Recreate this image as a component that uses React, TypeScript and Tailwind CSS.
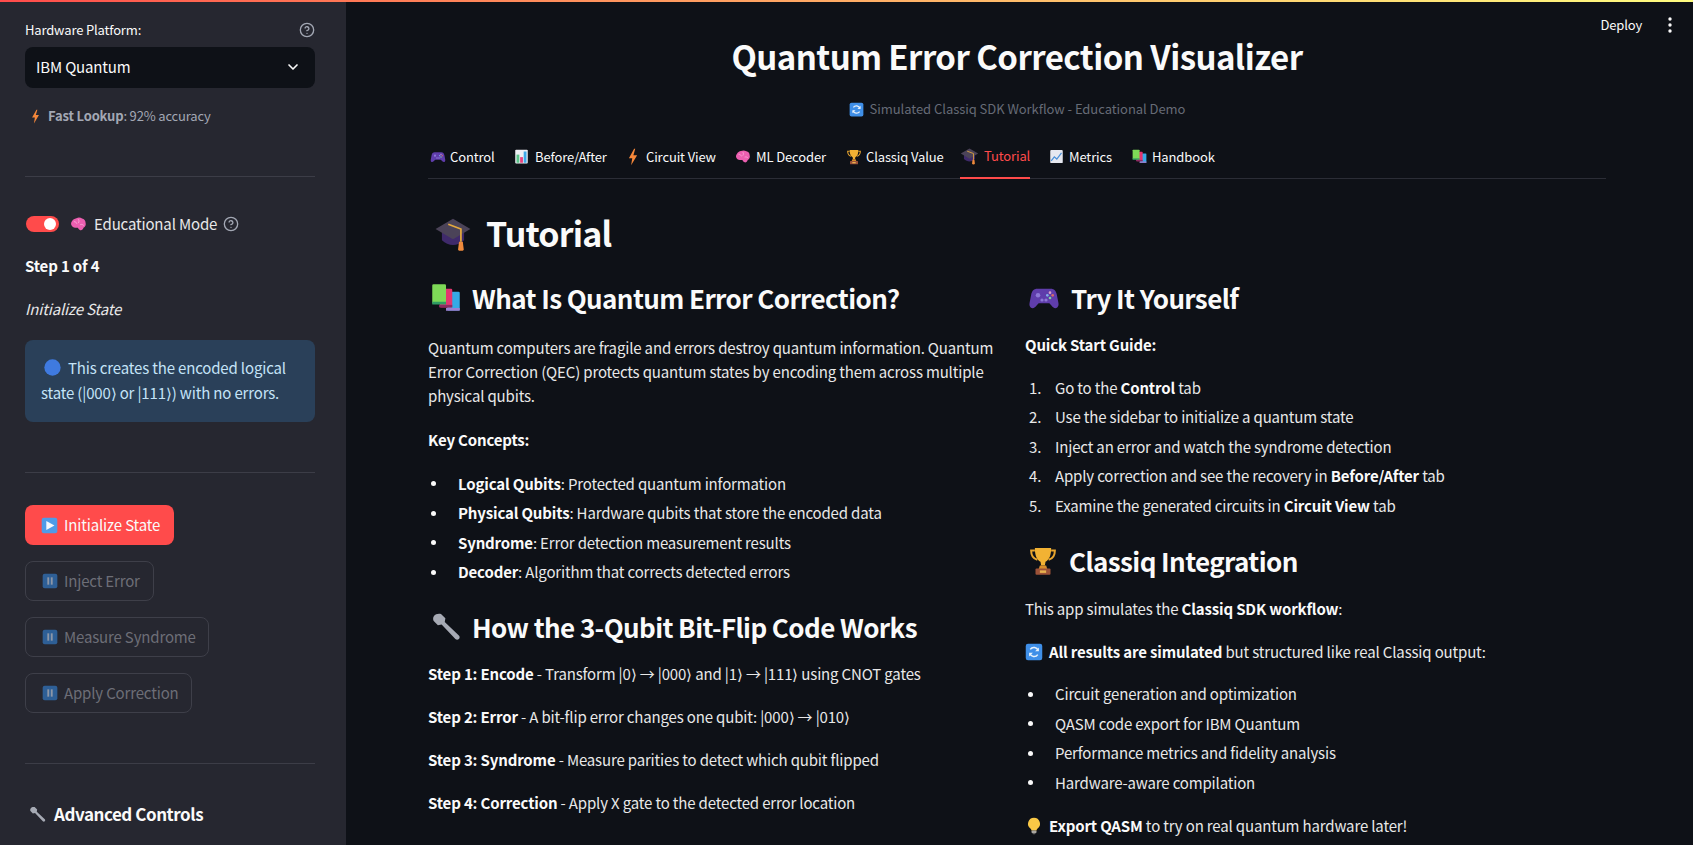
const Gamepad = ({ s }: { s: number }) => (
  <svg width={s} height={s} viewBox="0 0 24 24" className="shrink-0">
    <path d="M7 5h10c2.600 0 4 1.600 4.600 4.400l1.200 6.200c.5 2.400-.6 4-2.200 4-1.300 0-2.200-.9-3.200-2.200L16 16H8l-1.400 1.400C5.600 18.700 4.700 19.600 3.400 19.600c-1.600 0-2.700-1.600-2.200-4l1.200-6.200C3 6.600 4.400 5 7 5z" fill="#5f3dab" />
    <circle cx="7.500" cy="10" r="1.700" fill="#8d78d6" />
    <circle cx="10.500" cy="13.500" r="1.200" fill="#8d78d6" />
    <circle cx="13.500" cy="13.500" r="1.200" fill="#8d78d6" />
    <circle cx="16.500" cy="8" r="1" fill="#d9a0c8" />
    <circle cx="18.500" cy="10" r="1" fill="#d96a6a" />
    <circle cx="14.500" cy="10" r="1" fill="#7fb0e8" />
    <circle cx="16.500" cy="12" r="1" fill="#7fd0a0" />
  </svg>
);

const BarChart = ({ s }: { s: number }) => (
  <svg width={s} height={s} viewBox="0 0 24 24" className="shrink-0">
    <rect x="2" y="1" width="20" height="22" rx="1.500" fill="#eef0f4" />
    <rect x="4" y="9" width="4.500" height="13" fill="#5cc48a" />
    <rect x="9.800" y="13" width="4.500" height="9" fill="#e8437e" />
    <rect x="15.500" y="4" width="4.500" height="18" fill="#3fa9e8" />
  </svg>
);

const Bolt = ({ s }: { s: number }) => (
  <svg width={s} height={s} viewBox="0 0 24 24" className="shrink-0">
    <path d="M13.500 1 6.500 13.500h4.500L9.500 23l8-13.500h-5L15 1z" fill="#f5873a" />
  </svg>
);

const Brain = ({ s }: { s: number }) => (
  <svg width={s} height={s} viewBox="0 0 24 24" className="shrink-0">
    <path d="M9 3c3-1.500 6-1 8 .5 3 .5 5 3 5 6 1 3-.5 6-3 7-.5 2.500-2.500 4-4.500 3.500-1.500-.5-2.500-2-3.500-3.500-3 .5-6 0-8-2C1 12.500 1 9 3 7c1-2 3.500-3.500 6-4z" fill="#ec5fb0" />
    <path d="M6 8c2 0 3 1 3.500 2.500M12 5c1 1.500 1 3 0 4.500M15 12c1.500-.5 3 0 4 1" stroke="#f9a6d6" strokeWidth="1.300" fill="none" strokeLinecap="round" />
  </svg>
);

const Trophy = ({ s }: { s: number }) => (
  <svg width={s} height={s} viewBox="0 0 24 24" className="shrink-0">
    <path d="M5.500 3.500H2.500c0 4 1.500 6.500 5 7.500M18.500 3.500h3c0 4-1.500 6.500-5 7.500" stroke="#e8a52e" strokeWidth="1.600" fill="none" />
    <path d="M5.500 1.500h13c0 6-1.500 9.500-4.500 11l-.5 3h-3l-.5-3C7 11 5.500 7.500 5.500 1.500z" fill="#f2b233" />
    <path d="M9.500 15.500h5l1 3h-7z" fill="#d88d2a" />
    <rect x="6" y="18" width="12" height="5" rx=".8" fill="#9c5238" />
    <rect x="9.500" y="19.500" width="5" height="2" fill="#e8b24e" />
  </svg>
);

const Cap = ({ s }: { s: number }) => (
  <svg width={s} height={s} viewBox="0 0 24 24" className="shrink-0">
    <path d="M5 10.500v6c2 2 4.500 3 7 3s5-1 7-3v-6z" fill="#3f2a6b" />
    <path d="M12 3 1 9.500 12 16l11-6.500z" fill="#4b4358" />
    <path d="M9 6.500 17 9.500v8" stroke="#e3a93f" strokeWidth="1.100" fill="none" />
    <path d="M15.800 17.500h2.400l.6 5c-.4 1-3.200 1-3.600 0z" fill="#ef8a3c" />
  </svg>
);

const LineChart = ({ s }: { s: number }) => (
  <svg width={s} height={s} viewBox="0 0 24 24" className="shrink-0">
    <rect x="2" y="1.500" width="20" height="21" rx="1.500" fill="#e6e8f0" />
    <path d="M3.500 19 8.500 12.500l4 3.500 7.500-10" stroke="#4a90d9" strokeWidth="2" fill="none" />
  </svg>
);

const Books = ({ s }: { s: number }) => (
  <svg width={s} height={s} viewBox="0 0 24 24" className="shrink-0">
    <rect x="13" y="7" width="10" height="15" rx="1" fill="#35a9e6" />
    <rect x="12" y="20" width="11" height="2.200" fill="#9a7fd0" />
    <rect x="7" y="4.500" width="10" height="15" rx="1" fill="#e3356f" />
    <rect x="6.500" y="17.500" width="10.500" height="2" fill="#8c2a63" />
    <rect x="1" y="1" width="11" height="15.500" rx="1" fill="#7ed957" />
    <rect x="1" y="15" width="11" height="2.200" fill="#2f9c63" />
  </svg>
);

const Wrench = ({ s }: { s: number }) => (
  <svg width={s} height={s} viewBox="0 0 24 24" className="shrink-0">
    <path d="M2 6.500 5.500 10l3-.5 11 11.500c.8.800 2 .8 2.800 0s.8-2 0-2.800L11 7.500l.5-3L8 1C5.500.5 3.500 1.200 2.500 2.500 1.600 3.700 1.500 5 2 6.500z" fill="#a6aab4" transform="translate(0 .5)" />
  </svg>
);

const Refresh = ({ s }: { s: number }) => (
  <svg width={s} height={s} viewBox="0 0 24 24" className="shrink-0">
    <rect x="1" y="1" width="22" height="22" rx="3" fill="#3f8fe8" />
    <path d="M17.500 10A6 6 0 0 0 7 8.500M6.500 14A6 6 0 0 0 17 15.500" stroke="#e8f2fc" strokeWidth="2" fill="none" />
    <path d="M18.500 6v5h-5zM5.500 18v-5h5z" fill="#e8f2fc" />
  </svg>
);

const PlayBox = ({ s }: { s: number }) => (
  <svg width={s} height={s} viewBox="0 0 24 24" className="shrink-0">
    <rect x="1" y="1" width="22" height="22" rx="3" fill="#4f9be8" />
    <path d="M7.500 5.500 19 12 7.500 18.500z" fill="#f4f8fd" />
  </svg>
);

const PauseBox = ({ s }: { s: number }) => (
  <svg width={s} height={s} viewBox="0 0 24 24" className="shrink-0">
    <rect x="1" y="1" width="22" height="22" rx="3" fill="#2e5f96" />
    <rect x="8" y="6.500" width="2.800" height="11" fill="#8d97a8" />
    <rect x="13.200" y="6.500" width="2.800" height="11" fill="#8d97a8" />
  </svg>
);

const BlueCircle = ({ s }: { s: number }) => (
  <svg width={s} height={s} viewBox="0 0 24 24" className="shrink-0">
    <circle cx="12" cy="12" r="11.500" fill="#3f7ae0" />
  </svg>
);

const Bulb = ({ s }: { s: number }) => (
  <svg width={s} height={s} viewBox="0 0 24 24" className="shrink-0">
    <path d="M12 1a8 8 0 0 0-4.500 14.600c.8.700 1 1.400 1 2.400h7c0-1 .2-1.700 1-2.400A8 8 0 0 0 12 1z" fill="#f9c846" />
    <rect x="8.800" y="18" width="6.400" height="3.500" rx="1" fill="#a9a6a0" />
    <rect x="10.500" y="21.500" width="3" height="1.500" fill="#6f6d6a" />
  </svg>
);

const Help = () => (
  <svg width="16" height="16" viewBox="0 0 24 24" fill="none" stroke="#a3a8b4" strokeWidth="2" strokeLinecap="round" strokeLinejoin="round" className="shrink-0">
    <circle cx="12" cy="12" r="10" />
    <path d="M9.100 9a3 3 0 0 1 5.800 1c0 2-3 3-3 3" />
    <path d="M12 17h.01" />
  </svg>
);

const tabs = [
  { label: "Control", icon: <Gamepad s={16} />, w: "w-[84px]", gap: "gap-[4px]" },
  { label: "Before/After", icon: <BarChart s={15} />, w: "w-[110px]", gap: "gap-[6px]" },
  { label: "Circuit View", icon: <Bolt s={18} />, w: "w-[111px]", gap: "gap-[4px]" },
  { label: "ML Decoder", icon: <Brain s={16} />, w: "w-[111px]", gap: "gap-[5px]" },
  { label: "Classiq Value", icon: <Trophy s={16} />, w: "w-[114px]", gap: "gap-[4px]" },
  { label: "Tutorial", icon: <Cap s={19} />, w: "w-[89px]", gap: "gap-[5px]", active: true },
  { label: "Metrics", icon: <LineChart s={15} />, w: "w-[83px]", gap: "gap-[5px]" },
  { label: "Handbook", icon: <Books s={15} />, w: "w-[90px]", gap: "gap-[5px]" },
];

const Bullet = ({ children }: { children: React.ReactNode }) => (
  <li className="flex h-[29.5px] items-center">
    <span className="mr-[22px] ml-[3px] h-[5px] w-[5px] rounded-full bg-[#fafafa]" />
    <span>{children}</span>
  </li>
);

const Num = ({ n, children }: { n: number; children: React.ReactNode }) => (
  <li className="flex h-[29.5px] items-center">
    <span className="w-[30px] pl-[4px]">{n}.</span>
    <span>{children}</span>
  </li>
);

const Heading = ({ icon, children, className }: { icon: React.ReactNode; children: React.ReactNode; className: string }) => (
  <h2 className={`flex items-center gap-[11px] pl-[3px] text-[26px] leading-[36px] font-semibold tracking-[-0.6px] text-[#fafafa] ${className}`}>
    {icon}
    <span>{children}</span>
  </h2>
);

const DisabledBtn = ({ label, w }: { label: string; w: string }) => (
  <button className={`flex h-[40px] items-center gap-[6px] rounded-lg border border-[#3e3f49] pl-[16px] text-[15px] text-[#6d6e77] ${w}`}>
    <PauseBox s={16} />
    {label}
  </button>
);

export default function App() {
  return (
    <div
      className="relative flex h-screen w-full overflow-hidden bg-[#0e1117] text-[15px] leading-[24px] tracking-[-0.16px] text-[#e8e8e8]"
      style={{ fontFamily: '"Noto Sans CJK SC", "Noto Sans", sans-serif' }}
    >
      {/* top decoration */}
      <div className="absolute inset-x-0 top-0 z-10 h-[2px] bg-gradient-to-r from-[#ff4b4b] to-[#fffd80]" />

      {/* header actions */}
      <div className="absolute top-[14px] right-[15px] flex items-center gap-[20px] text-[13px] leading-[22px] text-[#fafafa]">
        <span>Deploy</span>
        <svg width="16" height="20" viewBox="0 0 16 20" fill="#fafafa">
          <circle cx="8" cy="4" r="1.700" />
          <circle cx="8" cy="10" r="1.700" />
          <circle cx="8" cy="16" r="1.700" />
        </svg>
      </div>

      {/* SIDEBAR */}
      <aside className="flex w-[346px] shrink-0 flex-col bg-[#262730] pt-[19px] pr-[31px] pl-[25px] text-[13px] leading-[22px]">
        <div className="flex h-[22px] items-center justify-between text-[#fafafa]">
          <span>Hardware Platform:</span>
          <Help />
        </div>
        <div className="mt-[6px] flex h-[41px] items-center justify-between rounded-lg bg-[#0e1117] pr-[14px] pb-[2px] pl-[11px] text-[15px] text-[#fafafa]">
          <span>IBM Quantum</span>
          <svg width="16" height="16" viewBox="0 0 24 24" fill="none" stroke="#fafafa" strokeWidth="2.500" strokeLinecap="round" strokeLinejoin="round">
            <path d="m6 9 6 6 6-6" />
          </svg>
        </div>
        <div className="mt-[17px] flex items-center gap-[5px] pl-[3px] text-[#a3a8b4]">
          <Bolt s={15} />
          <span><span className="font-semibold">Fast Lookup</span>: 92% accuracy</span>
        </div>
        <hr className="mt-[49px] border-t border-[#3c3d47]" />

        <div className="mt-[36px] flex items-center">
          <div className="ml-[1px] flex h-[16px] w-[33px] items-center justify-end rounded-full bg-[#ff4b4b] pr-[3px]">
            <div className="h-[12px] w-[12px] rounded-full bg-white" />
          </div>
          <span className="ml-[11px]"><Brain s={17} /></span>
          <span className="ml-[7px] text-[15px] text-[#e8e8e8]">Educational Mode</span>
          <span className="ml-[6px]"><Help /></span>
        </div>
        <div className="mt-[20px] h-[24px] text-[15px] font-bold text-[#fafafa]">Step 1 of 4</div>
        <div className="mt-[19px] h-[24px] text-[15px] text-[#e8e8e8] italic">Initialize State</div>
        <div className="mt-[18px] h-[82px] rounded-lg bg-[#2a4059] px-[16px] pt-[15px] text-[15px] leading-[25px] text-[#c4e3f7]">
          <span className="mr-[7px] ml-[3px] inline-block align-[-2px]"><BlueCircle s={17} /></span>
          This creates the encoded logical state (|000⟩ or |111⟩) with no errors.
        </div>
        <hr className="mt-[50px] border-t border-[#3c3d47]" />

        <div className="mt-[32px] flex flex-col items-start gap-[16px]">
          <button className="flex h-[40px] w-[149px] items-center gap-[6px] rounded-lg bg-[#ff4b4b] pl-[16px] text-[15px] text-[#fafafa]">
            <PlayBox s={17} />
            Initialize State
          </button>
          <DisabledBtn label="Inject Error" w="w-[129px]" />
          <DisabledBtn label="Measure Syndrome" w="w-[184px]" />
          <DisabledBtn label="Apply Correction" w="w-[167px]" />
        </div>
        <hr className="mt-[50px] border-t border-[#3c3d47]" />

        <div className="mt-[36px] flex items-center gap-[8px] pl-[4px] text-[17px] leading-[28px] font-semibold tracking-[-0.45px] text-[#fafafa]">
          <Wrench s={17} />
          Advanced Controls
        </div>
      </aside>

      {/* MAIN */}
      <main className="min-w-0 flex-1 pt-[32px] pr-[87px] pl-[82px]">
        <h1 className="text-center text-[33px] leading-[48px] font-semibold tracking-[-0.55px] text-[#fafafa]">
          Quantum Error Correction Visualizer
        </h1>
        <div className="mt-[17px] flex items-center justify-center gap-[6px] text-[13px] leading-[24px] tracking-[-0.05px] text-[#666b76]">
          <Refresh s={15} />
          Simulated Classiq SDK Workflow - Educational Demo
        </div>

        {/* tabs */}
        <div className="mt-[16px] flex h-[42px] border-b border-[#2b2d36] pl-[2px] text-[13px] tracking-[-0.13px] text-[#fafafa]">
          {tabs.map((t) => (
            <div key={t.label} className={`h-[42px] shrink-0 ${t.w}`}>
              <div
                className={`flex h-[42px] w-fit items-center pb-[3px] ${t.gap} ${
                  t.active ? "border-b-2 border-[#ff4b4b] text-[#ff4b4b]" : ""
                }`}
              >
                {t.icon}
                {t.label}
              </div>
            </div>
          ))}
        </div>

        {/* tutorial */}
        <div className="mt-[27px] flex items-center gap-[14px] pl-[6px] text-[34px] leading-[54px] font-semibold tracking-[-0.85px] text-[#fafafa]">
          <Cap s={38} />
          Tutorial
        </div>

        <div className="mt-[20px] grid grid-cols-[597px_1fr]">
          {/* left */}
          <div>
            <Heading icon={<Books s={30} />} className="">What Is Quantum Error Correction?</Heading>
            <p className="mt-[20px] w-[570px]">
              Quantum computers are fragile and errors destroy quantum information. Quantum Error Correction (QEC) protects quantum states by encoding them across multiple physical qubits.
            </p>
            <p className="mt-[20px] font-semibold text-[#fafafa]">Key Concepts:</p>
            <ul className="mt-[17px]">
              <Bullet><b className="font-semibold text-[#fafafa]">Logical Qubits</b>: Protected quantum information</Bullet>
              <Bullet><b className="font-semibold text-[#fafafa]">Physical Qubits</b>: Hardware qubits that store the encoded data</Bullet>
              <Bullet><b className="font-semibold text-[#fafafa]">Syndrome</b>: Error detection measurement results</Bullet>
              <Bullet><b className="font-semibold text-[#fafafa]">Decoder</b>: Algorithm that corrects detected errors</Bullet>
            </ul>
            <Heading icon={<Wrench s={30} />} className="mt-[22px]">How the 3-Qubit Bit-Flip Code Works</Heading>
            <p className="mt-[17px]"><b className="font-semibold text-[#fafafa]">Step 1: Encode</b> - Transform |0⟩ → |000⟩ and |1⟩ → |111⟩ using CNOT gates</p>
            <p className="mt-[19px]"><b className="font-semibold text-[#fafafa]">Step 2: Error</b> - A bit-flip error changes one qubit: |000⟩ → |010⟩</p>
            <p className="mt-[19px]"><b className="font-semibold text-[#fafafa]">Step 3: Syndrome</b> - Measure parities to detect which qubit flipped</p>
            <p className="mt-[19px]"><b className="font-semibold text-[#fafafa]">Step 4: Correction</b> - Apply X gate to the detected error location</p>
          </div>

          {/* right */}
          <div>
            <Heading icon={<Gamepad s={32} />} className="">Try It Yourself</Heading>
            <p className="mt-[17px] font-semibold text-[#fafafa]">Quick Start Guide:</p>
            <ol className="mt-[16px]">
              <Num n={1}>Go to the <b className="font-semibold text-[#fafafa]">Control</b> tab</Num>
              <Num n={2}>Use the sidebar to initialize a quantum state</Num>
              <Num n={3}>Inject an error and watch the syndrome detection</Num>
              <Num n={4}>Apply correction and see the recovery in <b className="font-semibold text-[#fafafa]">Before/After</b> tab</Num>
              <Num n={5}>Examine the generated circuits in <b className="font-semibold text-[#fafafa]">Circuit View</b> tab</Num>
            </ol>
            <Heading icon={<Trophy s={30} />} className="mt-[22px]">Classiq Integration</Heading>
            <p className="mt-[18px]">This app simulates the <b className="font-semibold text-[#fafafa]">Classiq SDK workflow</b>:</p>
            <p className="mt-[19px] flex items-center gap-[6px]">
              <Refresh s={18} />
              <span><b className="font-semibold text-[#fafafa]">All results are simulated</b> but structured like real Classiq output:</span>
            </p>
            <ul className="mt-[16px]">
              <Bullet>Circuit generation and optimization</Bullet>
              <Bullet>QASM code export for IBM Quantum</Bullet>
              <Bullet>Performance metrics and fidelity analysis</Bullet>
              <Bullet>Hardware-aware compilation</Bullet>
            </ul>
            <p className="mt-[16px] flex items-center gap-[6px]">
              <Bulb s={18} />
              <span><b className="font-semibold text-[#fafafa]">Export QASM</b> to try on real quantum hardware later!</span>
            </p>
          </div>
        </div>
      </main>
    </div>
  );
}
